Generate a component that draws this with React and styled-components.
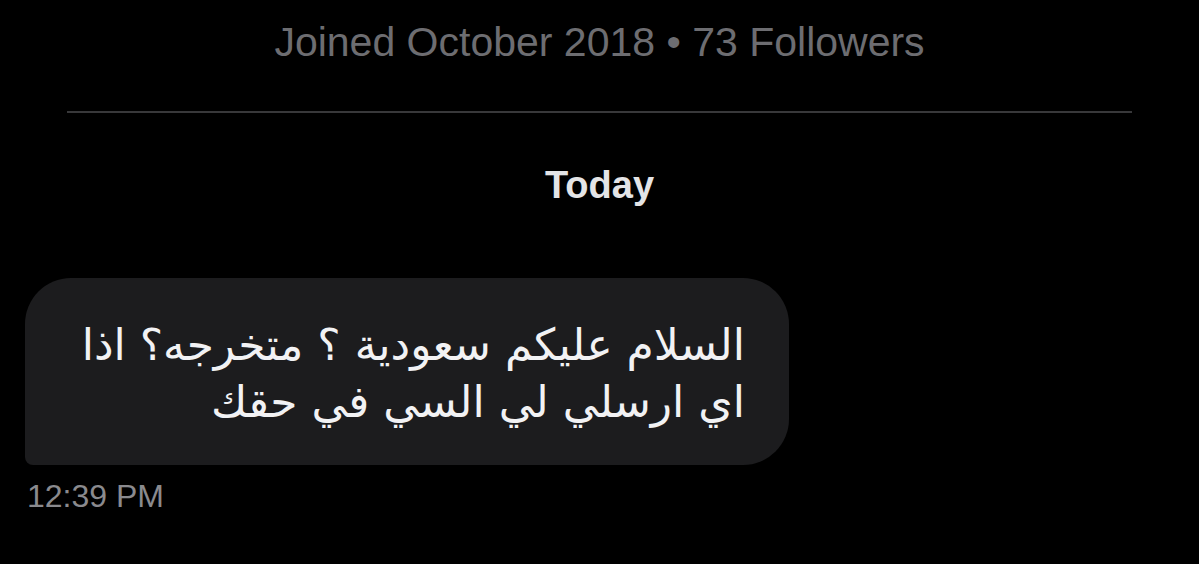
import React from "react";
import styled, { createGlobalStyle } from "styled-components";

const GlobalStyle = createGlobalStyle`
	html, body {
		margin: 0;
		padding: 0;
		background: #000;
	}
	body {
		font-family: "Liberation Sans", Arial, sans-serif;
	}
`;

const Page = styled.div`
	width: 1199px;
	height: 564px;
	background: #000;
	overflow: hidden;
	display: flex;
	flex-direction: column;
`;

const ProfileMeta = styled.div`
	padding-top: 19px;
	text-align: center;
	font-size: 41px;
	line-height: 47px;
	color: #6d6d71;
`;

const Divider = styled.hr`
	margin: 45px 67px 0;
	border: 0;
	height: 2px;
	background: #38383a;
`;

const DayLabel = styled.div`
	margin-top: 51px;
	text-align: center;
	font-size: 38px;
	font-weight: 700;
	line-height: 42px;
	color: #e4e4e6;
`;

const Bubble = styled.div`
	margin: 72px 0 0 25px;
	width: 764px;
	height: 187px;
	box-sizing: border-box;
	padding: 2px 44px 0;
	background: #1c1c1e;
	border-radius: 46px 46px 46px 8px;
	display: flex;
	flex-direction: column;
	justify-content: center;
`;

const MessageText = styled.p`
	margin: 0;
	direction: rtl;
	text-align: right;
	font-family: "DejaVu Sans", "Noto Sans", sans-serif;
	font-size: 44px;
	line-height: 57px;
	color: #f2f2f4;
`;

const Timestamp = styled.div`
	margin: 13px 0 0 27px;
	font-size: 32px;
	line-height: 36px;
	color: #8a8a8e;
`;

export default function App() {
	return (
		<Page>
			<GlobalStyle />
			<ProfileMeta>Joined October 2018 • 73 Followers</ProfileMeta>
			<Divider />
			<DayLabel>Today</DayLabel>
			<Bubble>
				<MessageText>
					السلام عليكم سعودية ؟ متخرجه؟ اذا
					<br />
					اي ارسلي لي السي في حقك
				</MessageText>
			</Bubble>
			<Timestamp>12:39 PM</Timestamp>
		</Page>
	);
}
